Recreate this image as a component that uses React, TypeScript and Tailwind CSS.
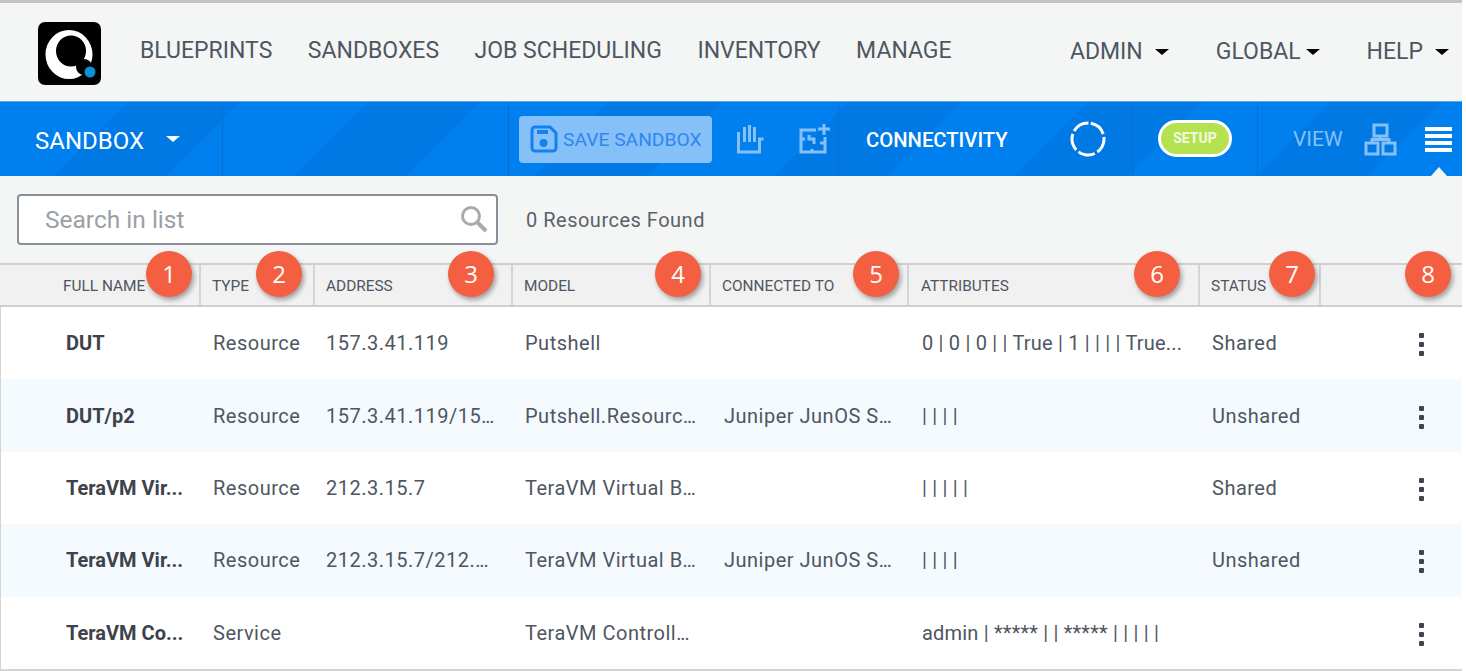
import React from 'react';

const rows = [
  { name: 'DUT', type: 'Resource', address: '157.3.41.119', model: 'Putshell', connected: '', attrs: '0 | 0 | 0 | | True | 1 | | | | True...', status: 'Shared' },
  { name: 'DUT/p2', type: 'Resource', address: '157.3.41.119/15...', model: 'Putshell.Resourc...', connected: 'Juniper JunOS S...', attrs: '| | | |', status: 'Unshared' },
  { name: 'TeraVM Vir...', type: 'Resource', address: '212.3.15.7', model: 'TeraVM Virtual B...', connected: '', attrs: '| | | | |', status: 'Shared' },
  { name: 'TeraVM Vir...', type: 'Resource', address: '212.3.15.7/212....', model: 'TeraVM Virtual B...', connected: 'Juniper JunOS S...', attrs: '| | | |', status: 'Unshared' },
  { name: 'TeraVM Co...', type: 'Service', address: '', model: 'TeraVM Controll...', connected: '', attrs: 'admin | ***** | | ***** | | | | |', status: '' },
];

const headers = [
  { label: 'FULL NAME', w: 'w-[201px] pl-[63px]', badge: '1', badgeX: 'left-[146px]' },
  { label: 'TYPE', w: 'w-[114px] pl-[11px]', badge: '2', badgeX: 'left-[55px]' },
  { label: 'ADDRESS', w: 'w-[198px] pl-[11px]', badge: '3', badgeX: 'left-[133px]' },
  { label: 'MODEL', w: 'w-[198px] pl-[11px]', badge: '4', badgeX: 'left-[142px]' },
  { label: 'CONNECTED TO', w: 'w-[198px] pl-[11px]', badge: '5', badgeX: 'left-[142px]' },
  { label: 'ATTRIBUTES', w: 'w-[291px] pl-[12px]', badge: '6', badgeX: 'left-[225px]' },
  { label: 'STATUS', w: 'w-[121px] pl-[11px]', badge: '7', badgeX: 'left-[69px]' },
  { label: '', w: 'flex-1', badge: '8', badgeX: 'left-[84px]' },
];

function Caret({ className }: { className: string }) {
  return <span className={`inline-block w-0 h-0 border-x-[7px] border-x-transparent border-t-[6px] ${className}`} />;
}

function Dots() {
  return (
    <div className="flex flex-col gap-[4px] mt-[3px]">
      <span className="w-[5px] h-[5px] rounded-[1px] bg-[#3f4550]" />
      <span className="w-[5px] h-[5px] rounded-[1px] bg-[#3f4550]" />
      <span className="w-[5px] h-[5px] rounded-[1px] bg-[#3f4550]" />
    </div>
  );
}

// the cut-off cells have a tighter ellipsis
function Clip({ text }: { text: string }) {
  if (!text.endsWith('...')) return <>{text}</>;
  return (
    <>
      {text.slice(0, -3)}
      <span className="tracking-[-1.2px]">...</span>
    </>
  );
}

export default function App() {
  return (
    <div className="w-[1466px] h-[671px] overflow-hidden bg-white font-['Roboto',sans-serif]">
      <div className="w-[1462px] h-[671px] bg-[#f4f6f5] border-t-[3px] border-[#c4c4c4] flex flex-col">
        {/* top nav */}
        <div className="h-[98px] flex items-center pl-[38px] text-[#4f5661] text-[23px] shrink-0">
          <svg width="63" height="63" viewBox="0 0 63 63" className="mt-[2px] shrink-0">
            <rect width="63" height="63" rx="7" fill="#000" />
            <path fillRule="evenodd" fill="#fff" d="M31 8a23.500 24.500 0 1 0 0 49a23.500 24.500 0 0 0 0-49zM33 13.500a15 15.500 0 1 1 0 31a15 15.500 0 0 1 0-31z" />
            <circle cx="46" cy="45" r="8" fill="#000" />
            <circle cx="52" cy="50" r="5.500" fill="#0f8fd6" />
          </svg>
          <div className="flex ml-[39px] gap-[35.500px] -mt-[2px]">
            <span>BLUEPRINTS</span>
            <span>SANDBOXES</span>
            <span>JOB SCHEDULING</span>
            <span>INVENTORY</span>
            <span>MANAGE</span>
          </div>
          <div className="ml-auto flex items-center pr-[13px]">
            <span>ADMIN</span>
            <Caret className="border-t-black ml-[12px]" />
            <span className="ml-[47px]">GLOBAL</span>
            <Caret className="border-t-black ml-[5px]" />
            <span className="ml-[47px]">HELP</span>
            <Caret className="border-t-black ml-[12px]" />
          </div>
        </div>

        {/* blue toolbar */}
        <div className="relative h-[75px] shrink-0 flex items-center text-white border-t border-[#59a8ec] bg-[#0080ee] bg-[repeating-linear-gradient(135deg,#0080ee_0px,#0080ee_90px,#0079e4_90px,#0079e4_170px)]">
          <div className="w-[223px] h-full flex items-center pl-[35px] border-r border-[#0a6fc9] text-[24px] shrink-0">
            <span className="mt-[4px]">SANDBOX</span>
            <Caret className="border-t-white ml-[22px]" />
          </div>
          <div className="w-[286px] h-full border-r border-[#0a6fc9] shrink-0" />
          <div className="w-[330px] h-full border-r border-[#0a6fc9] flex items-center pl-[10px] shrink-0">
            <div className="w-[193px] h-[47px] rounded-[4px] bg-[#85c0f9] flex items-center pl-[11px] text-[#2f86f0] text-[19.250px]">
              <svg width="28" height="28" viewBox="0 0 28 28" fill="none" stroke="#1481f0" strokeWidth="3" className="shrink-0">
                <path d="M5 2h15l6 6v15a3 3 0 0 1-3 3H5a3 3 0 0 1-3-3V5a3 3 0 0 1 3-3z" />
                <path d="M7 7h11" strokeWidth="4" />
                <circle cx="13.500" cy="18" r="2.500" fill="#1481f0" />
              </svg>
              <span className="ml-[5px] whitespace-nowrap mt-[2px]">SAVE SANDBOX</span>
            </div>
            <svg width="30" height="30" viewBox="0 0 30 30" fill="none" stroke="#85c0f9" strokeWidth="3" className="ml-[24px] shrink-0">
              <path d="M2.500 8v20h21v-13h4M8.500 3v15M13.500 1v17M18.500 3v15" />
            </svg>
            <svg width="32" height="32" viewBox="0 0 32 32" fill="none" stroke="#85c0f9" strokeWidth="3" className="ml-[33px] shrink-0">
              <path d="M17 7H2v22h24V14M2 16h4M13 29v-3M26 20h-5M10 12v4h5v5M25 1v11M19 6h12" />
            </svg>
          </div>
          <div className="w-[294px] h-full border-r border-[#0a6fc9] flex items-center pl-[27px] shrink-0">
            <span className="text-[20.250px] font-medium whitespace-nowrap mt-[3px]">CONNECTIVITY</span>
            <svg width="36" height="36" viewBox="0 0 36 36" fill="none" stroke="#fff" strokeWidth="3" className="ml-[62px] -mt-[1px] shrink-0">
              <circle cx="18" cy="18" r="16" strokeDasharray="17.100 3" transform="rotate(-80 18 18)" />
            </svg>
          </div>
          <div className="w-[125px] h-full border-r border-[#0a6fc9] flex items-center pl-[25px] shrink-0">
            <div className="w-[74px] h-[37px] rounded-full bg-[#b5e251] border-[3px] border-white flex items-center justify-center text-[#f4f9e4] text-[14px] font-bold -mt-[1px]">SETUP</div>
          </div>
          <div className="flex-1 h-full flex items-center pl-[35px]">
            <span className="text-[#85c0f9] text-[21px] mt-[1px]">VIEW</span>
            <svg width="33" height="33" viewBox="0 0 33 33" fill="none" stroke="#85c0f9" strokeWidth="3" className="ml-[21px] shrink-0">
              <path d="M10 2h13v11H10zM2 20h12v11H2zM19 20h12v11H19zM16.500 13v3.500M8 20v-3.500h17V20" />
            </svg>
            <div className="ml-[28px] flex flex-col gap-[3px]">
              <span className="w-[27px] h-[4px] bg-white" />
              <span className="w-[27px] h-[4px] bg-white" />
              <span className="w-[27px] h-[4px] bg-white" />
              <span className="w-[27px] h-[4px] bg-white" />
            </div>
          </div>
          <span className="absolute left-[1431px] bottom-0 w-0 h-0 border-x-[8px] border-x-transparent border-b-[9px] border-b-[#f4f6f5]" />
        </div>

        {/* search */}
        <div className="h-[87px] shrink-0 flex items-center pl-[17px]">
          <div className="w-[481px] h-[51px] rounded-[4px] border-2 border-[#8a909a] bg-white flex items-center justify-between pl-[26px] pr-[7px] -mt-[1px]">
            <span className="text-[#9aa0a6] text-[24.500px] mt-[2px]">Search in list</span>
            <svg width="30" height="30" viewBox="0 0 30 30" fill="none" stroke="#a8abad" strokeWidth="3">
              <circle cx="12" cy="12" r="8.500" />
              <path d="M18 18l9 9" strokeWidth="4" />
            </svg>
          </div>
          <span className="ml-[28px] text-[#5b6169] text-[20px] tracking-[0.5px] mt-[1px]">0 Resources Found</span>
        </div>

        {/* table header */}
        <div className="h-[44px] shrink-0 flex bg-[#f1f1f1] border-y-2 border-[#cfcfcf]">
          {headers.map((h) => (
            <div key={h.badge} className={`relative h-full flex items-center text-[15.400px] text-[#4f5661] border-r-2 border-[#d4d4d4] last:border-r-0 shrink-0 ${h.w}`}>
              <span className="mt-[4px] whitespace-nowrap">{h.label}</span>
              <span className={`absolute -top-[14px] ${h.badgeX} w-[46px] h-[46px] rounded-full bg-[#f45f41] text-white text-[24px] flex items-center justify-center font-['Open_Sans',sans-serif] shadow-[2px_3px_5px_rgba(0,0,0,0.35)] z-10`}>{h.badge}</span>
            </div>
          ))}
        </div>

        {/* rows */}
        <div className="flex-1 flex flex-col border-l border-b-2 border-[#d4d4d4]">
          {rows.map((r, i) => (
            <div key={i} className={`flex-1 flex items-center text-[20px] tracking-[0.5px] whitespace-nowrap text-[#4f5661] ${i % 2 === 1 ? 'bg-[#f5fafe]' : 'bg-white'}`}>
              <div className="w-[199px] pl-[65px] font-bold tracking-normal text-[#3d424b] shrink-0">{r.name}</div>
              <div className="w-[114px] pl-[13px] shrink-0">{r.type}</div>
              <div className="w-[198px] pl-[12px] shrink-0"><Clip text={r.address} /></div>
              <div className="w-[198px] pl-[13px] shrink-0"><Clip text={r.model} /></div>
              <div className="w-[198px] pl-[14px] shrink-0"><Clip text={r.connected} /></div>
              <div className="w-[291px] pl-[14px] tracking-[0.2px] shrink-0">{r.attrs}</div>
              <div className="w-[220px] pl-[13px] shrink-0">{r.status}</div>
              <Dots />
            </div>
          ))}
        </div>
      </div>
    </div>
  );
}
